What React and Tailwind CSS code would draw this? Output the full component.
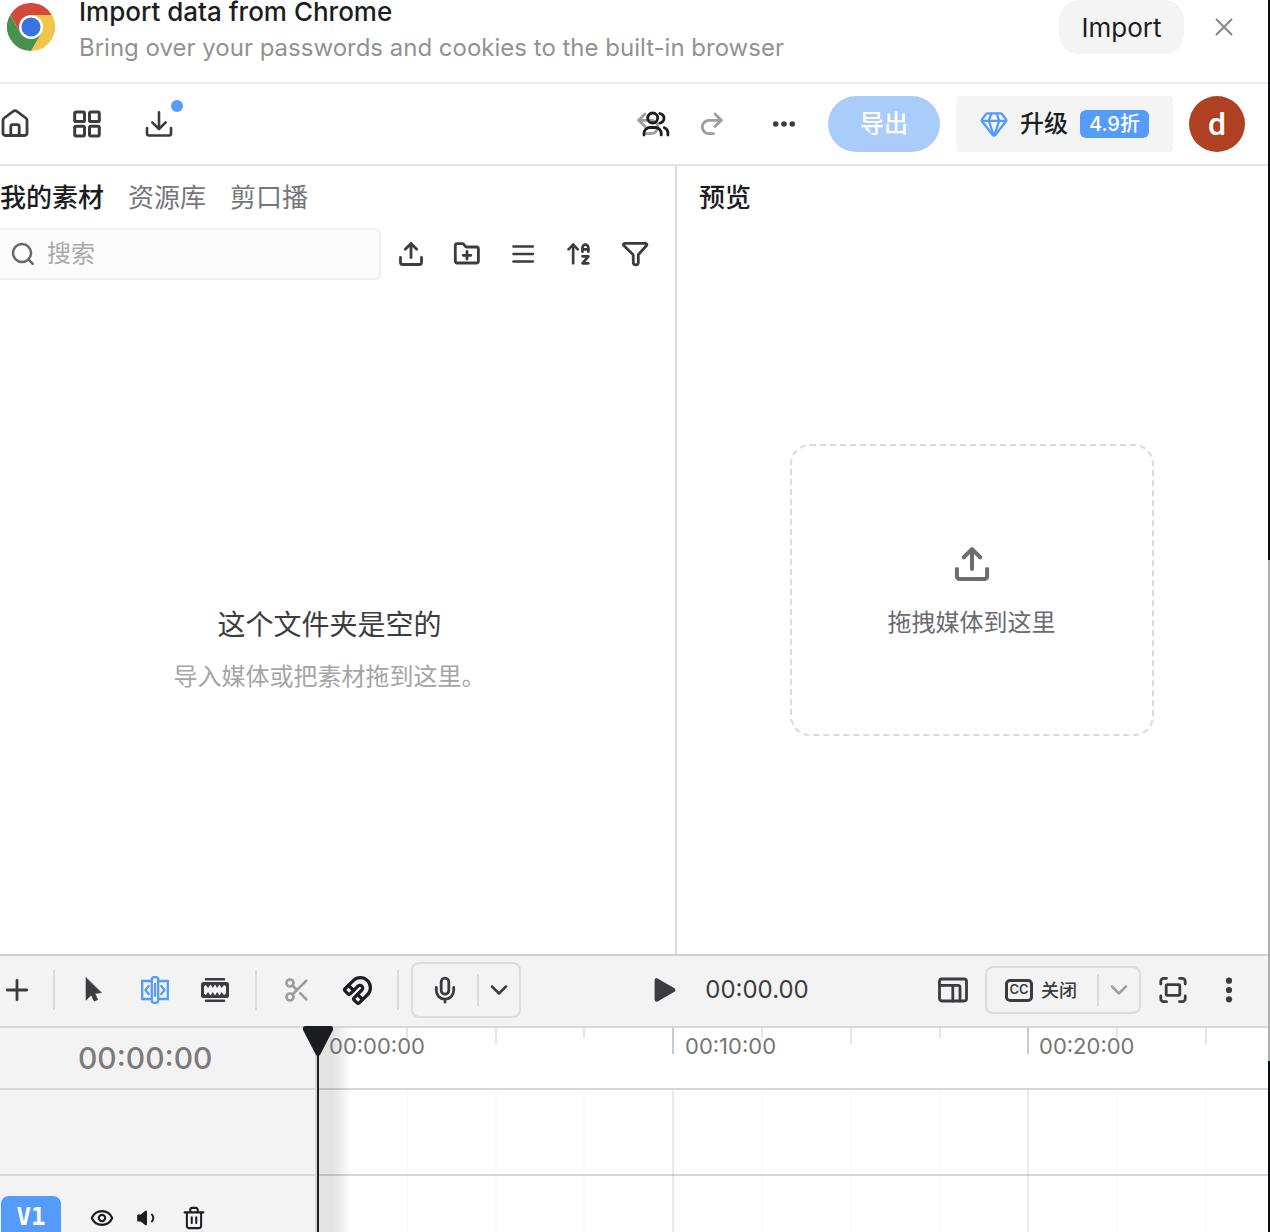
import { useState } from "react";
import { ArrowUpAZ, Magnet, Scissors } from "lucide-react";

const RULER_STEP = 88.8;

const ticks = Array.from({ length: 24 }, (_, i) => {
  const n = i + 1;
  return { n, left: Math.round(n * RULER_STEP), major: n % 4 === 0, half: n % 2 === 0 };
});

const labels = [
  { text: "00:00:00", left: 12 },
  { text: "00:10:00", left: 368 },
  { text: "00:20:00", left: 722 },
];

function Icon({ size = 32, stroke = 2.8, className = "", children }) {
  return (
    <svg
      width={size}
      height={size}
      viewBox="0 0 32 32"
      fill="none"
      stroke="currentColor"
      strokeWidth={stroke}
      strokeLinecap="round"
      strokeLinejoin="round"
      className={`shrink-0 ${className}`}
      aria-hidden="true"
    >
      {children}
    </svg>
  );
}

function IconButton({ label, className = "w-10", children }) {
  return (
    <button type="button" aria-label={label} className={`flex h-10 shrink-0 items-center justify-center ${className}`}>
      {children}
    </button>
  );
}

function Divider() {
  return <span className="h-10 w-0.5 shrink-0 bg-[#dcdcdc]" />;
}

function ChromeLogo() {
  return (
    <svg width="48" height="48" viewBox="0 0 48 48" className="shrink-0" aria-hidden="true">
      <path d="M3.2 12A24 24 0 0 1 44.8 12H24V24L13.6 30z" fill="#d24b3a" />
      <path d="M44.8 12A24 24 0 0 1 24 48L34.4 30 24 24V12z" fill="#f2c548" />
      <path d="M24 48A24 24 0 0 1 3.2 12L13.6 30 24 24 34.4 30z" fill="#48914c" />
      <circle cx="24" cy="24" r="12" fill="#fff" />
      <circle cx="24" cy="24" r="9.6" fill="#3a72e0" />
    </svg>
  );
}

function UploadIcon({ size, stroke }) {
  return (
    <Icon size={size} stroke={stroke}>
      <path d="M5.5 19.5V24.5a2 2 0 0 0 2 2h17a2 2 0 0 0 2-2V19.5" />
      <path d="M16 19.5V5.5M10.3 11.3 16 5.6l5.7 5.7" />
    </Icon>
  );
}

function Chevron({ className }) {
  return (
    <Icon className={className} stroke={2.5}>
      <path d="m9 12.5 7 7 7-7" />
    </Icon>
  );
}

function ImportBanner() {
  return (
    <header className="shrink-0 border-b-2 border-[#ebebeb] pb-7">
      <div className="flex h-[54px] items-center pr-6 pl-[7px]">
        <ChromeLogo />
        <div className="ml-6 min-w-0 flex-1 self-start">
          <p className="text-[26px] leading-6 font-medium whitespace-nowrap text-[#1c1d22]">Import data from Chrome</p>
          <p className="mt-1.5 text-2xl leading-9 whitespace-nowrap text-[#929292]">
            Bring over your passwords and cookies to the built-in browser
          </p>
        </div>
        <button type="button" className="h-full w-[125px] rounded-[20px] bg-[#f4f4f4] text-[26px] text-[#1c1d22]">
          Import
        </button>
        <IconButton label="Close" className="ml-5 w-10 text-[#858585]">
          <Icon stroke={2}>
            <path d="m8.5 8.5 15 15M23.5 8.5l-15 15" />
          </Icon>
        </IconButton>
      </div>
    </header>
  );
}

function TopBar() {
  return (
    <div className="flex h-[82px] shrink-0 items-center justify-between border-b-2 border-[#e4e4e4] pr-[23px] text-[#3c3c40]">
      <nav className="-ml-[13px] flex gap-4">
        <IconButton label="主页" className="w-14">
          <Icon>
            <path d="M4 25.3V12.4a3 3 0 0 1 1.2-2.4l8.7-6.5a3.4 3.4 0 0 1 4.2 0l8.7 6.5a3 3 0 0 1 1.2 2.4v12.9a2.2 2.2 0 0 1-2.2 2.2H6.2A2.2 2.2 0 0 1 4 25.3z" />
            <path d="M11.8 27.5v-8.8a2 2 0 0 1 2-2h4.4a2 2 0 0 1 2 2v8.8" />
          </Icon>
        </IconButton>
        <IconButton label="项目" className="w-14">
          <Icon stroke={3}>
            <rect x="3.7" y="4" width="9.8" height="9.6" rx="1.4" />
            <rect x="18.5" y="4" width="9.8" height="9.6" rx="1.4" />
            <rect x="3.7" y="18.2" width="9.8" height="9.8" rx="1.4" />
            <rect x="18.5" y="18.2" width="9.8" height="9.8" rx="1.4" />
          </Icon>
        </IconButton>
        <div className="relative">
          <IconButton label="下载" className="w-14">
            <Icon stroke={2.6}>
              <path d="M4 20v5.5a2 2 0 0 0 2 2h20a2 2 0 0 0 2-2V20" />
              <path d="M16 4.2V21M9.3 14.3l6.7 6.7 6.7-6.7" />
            </Icon>
          </IconButton>
          <span className="absolute -top-1 right-1 size-3 rounded-full bg-[#559bfa]" />
        </div>
      </nav>

      <div className="flex items-center gap-4">
        <div className="flex gap-2 text-[#9d9d9d]">
          <div className="relative">
            <IconButton label="撤销" className="w-14">
              <Icon>
                <path d="M6.5 12.3H19a6.7 6.7 0 0 1 0 13.4h-4.5M13 6l-6.3 6.3 6.3 6.3" />
              </Icon>
            </IconButton>
            <button type="button" aria-label="协作" className="absolute top-1 left-5 text-[#1c1d22]">
              <Icon stroke={2.8}>
                <circle cx="12.7" cy="10" r="5" />
                <path d="M4 27v-1.5a6 6 0 0 1 6-6h5.2a6 6 0 0 1 6 6V27" />
                <path d="M19.8 5.5c5.6 1.2 5.6 8.2 0 9.6M24.3 19.8c2.2.8 3.6 2.8 3.6 5.2v2" />
              </Icon>
            </button>
          </div>
          <IconButton label="重做" className="w-14">
            <Icon>
              <path d="M25.5 12.3H13a6.7 6.7 0 0 0 0 13.4h4.5M19 6l6.3 6.3-6.3 6.3" />
            </Icon>
          </IconButton>
        </div>
        <IconButton label="更多" className="w-14">
          <Icon>
            <g fill="currentColor" stroke="none">
              <circle cx="7.7" cy="16" r="2.8" />
              <circle cx="16" cy="16" r="2.8" />
              <circle cx="24.3" cy="16" r="2.8" />
            </g>
          </Icon>
        </IconButton>
        <button type="button" className="h-14 w-28 rounded-full bg-[#aaccfb] text-2xl font-medium text-white">
          导出
        </button>
        <button type="button" className="flex h-14 w-[217px] items-center rounded bg-[#f4f4f4] pl-[22px] text-[#1c1d22]">
          <Icon stroke={2.3} className="text-[#559bfa]">
            <path d="M9.5 5.4h13a2 2 0 0 1 1.6.8l3.9 5a1.6 1.6 0 0 1 0 2.1L17.3 27a1.7 1.7 0 0 1-2.6 0L4 13.3a1.6 1.6 0 0 1 0-2.1l3.9-5a2 2 0 0 1 1.6-.8z" />
            <path d="M4 12.8h24M13.2 5.6l-2.4 7.2L15.6 27M18.8 5.6l2.4 7.2L16.4 27" />
          </Icon>
          <span className="ml-[10px] text-2xl font-medium">升级</span>
          <span className="ml-3 flex h-7 w-[69px] items-center justify-center rounded-md bg-[#559bfa] text-xl font-medium text-white">
            4.9折
          </span>
        </button>
        <button type="button" className="size-14 rounded-full bg-[#af4022] font-['Roboto'] text-[32px] font-medium text-white">
          d
        </button>
      </div>
    </div>
  );
}

function MediaPanel() {
  const [tab, setTab] = useState("我的素材");
  const [query, setQuery] = useState("");

  return (
    <section className="flex min-w-0 flex-col border-r-2 border-[#dadada]">
      <div className="flex h-[62px] items-center gap-6 text-[26px]">
        {["我的素材", "资源库", "剪口播"].map((name) => (
          <button
            key={name}
            type="button"
            onClick={() => setTab(name)}
            className={tab === name ? "font-medium text-[#1c1d22]" : "text-[#75757a]"}
          >
            {name}
          </button>
        ))}
      </div>
      <div className="flex items-center pr-5 text-[#3c3c40]">
        <label className="-ml-1 flex h-[52px] min-w-0 flex-1 items-center rounded-md border-2 border-[#efefef] bg-[#fcfcfc] pl-[9px]">
          <Icon className="text-[#66666b]" stroke={2.5}>
            <circle cx="15" cy="15" r="9" />
            <path d="m21.6 21.6 4.2 4.2" />
          </Icon>
          <input
            type="text"
            aria-label="搜索"
            placeholder="搜索"
            value={query}
            onChange={(e) => setQuery(e.target.value)}
            className="ml-2 min-w-0 flex-1 bg-transparent text-2xl outline-none placeholder:text-[#a9a9a9]"
          />
        </label>
        <div className="ml-[10px] flex gap-4">
          <IconButton label="上传">
            <UploadIcon />
          </IconButton>
          <IconButton label="新建文件夹">
            <Icon>
              <path d="M4.3 23V7.6a2 2 0 0 1 2-2h5a2 2 0 0 1 1.5.7l1.6 2a2 2 0 0 0 1.5.7h9.5a2 2 0 0 1 2 2V23a2 2 0 0 1-2 2H6.3a2 2 0 0 1-2-2z" />
              <path d="M16 13.5v7.6M12.2 17.3h7.6" />
            </Icon>
          </IconButton>
          <IconButton label="列表视图">
            <Icon stroke={2.6}>
              <path d="M6.5 8.5h19.3M6.5 16h19.3M6.5 23.5h19.3" />
            </Icon>
          </IconButton>
          <IconButton label="排序">
            <ArrowUpAZ size={28} strokeWidth={2.3} />
          </IconButton>
          <IconButton label="筛选">
            <Icon>
              <path d="M5.7 5.3h20.8a1.3 1.3 0 0 1 1 2.2l-8.2 9.2v7.8a2.3 2.3 0 0 1-2.3 2.3h-.4a2.3 2.3 0 0 1-2.3-2.3l-.1-7.8L4.8 7.5a1.3 1.3 0 0 1 .9-2.2z" />
            </Icon>
          </IconButton>
        </div>
      </div>
      <div className="flex flex-1 flex-col items-center justify-center pt-[68px] pr-4">
        <h2 className="text-[28px] leading-10 text-[#3c3c40]">这个文件夹是空的</h2>
        <p className="mt-3 text-2xl leading-10 text-[#a5a5a5]">导入媒体或把素材拖到这里。</p>
      </div>
    </section>
  );
}

function PreviewPanel() {
  return (
    <section className="flex min-w-0 flex-col">
      <h2 className="flex h-[62px] items-center pl-[22px] text-[26px] font-medium text-[#1c1d22]">预览</h2>
      <div className="flex flex-1 items-center justify-center pr-0.5 pb-0.5">
        <button
          type="button"
          className="flex h-[292px] w-[364px] flex-col items-center justify-center rounded-[20px] border-2 border-dashed border-[#dadada] text-2xl text-[#6b6b70]"
        >
          <UploadIcon size={46} stroke={2.8} />
          <span className="mt-5">拖拽媒体到这里</span>
        </button>
      </div>
    </section>
  );
}

function TimelineToolbar() {
  return (
    <div className="flex h-[74px] shrink-0 items-center justify-between border-y-2 border-t-[#cfcfcf] border-b-[#d7d7d7] bg-[#f3f3f3] pb-0.5 text-[#3c3c40]">
      <div className="flex items-center">
        <IconButton label="添加轨道" className="-ml-[3px] w-10">
          <Icon stroke={2.8}>
            <path d="M16 6.3v19.4M6.3 16h19.4" />
          </Icon>
        </IconButton>
        <div className="ml-4 flex items-center">
          <Divider />
          <IconButton label="选择" className="ml-[18px] w-10">
            <Icon stroke={0.6}>
              <path fill="currentColor" d="M9 3.8v22.4l5.3-5.2 2.9 6.2 3.6-1.6-3-6.2 6.5-.6z" />
            </Icon>
          </IconButton>
          <IconButton label="分割" className="ml-[22px] w-10 text-[#559bfa]">
            <Icon stroke={2.3}>
              <path d="M12.6 7H3.2v18h9.4M19.4 7h9.4v18h-9.4" strokeLinejoin="miter" />
              <rect x="12.8" y="3.2" width="6.4" height="25.6" rx="2.6" />
              <path d="M16 10v12M9.8 12 6.4 16l3.4 4.2M22.2 12l3.4 4-3.4 4.2" />
            </Icon>
          </IconButton>
          <IconButton label="波形" className="ml-5 w-10">
            <Icon stroke={2.6}>
              <path d="M7 5.3h18M7 26.7h18" />
              <rect x="2" y="8" width="28" height="16" rx="2.5" fill="currentColor" stroke="none" />
              <path
                d="M5 12.5l1.8-1.5 2.2 3 2.6-3.6 2.2 3.6 2.2-3.6 2.2 3.6 2.2-3.6 2.2 3.6 2.4-3 2 1.5v7l-2 1.5-2.4-3-2.2 3.6-2.2-3.6-2.2 3.6-2.2-3.6-2.2 3.6L9 18l-2.2 3L5 19.5z"
                fill="#f7f7f7"
                stroke="none"
              />
            </Icon>
          </IconButton>
        </div>
        <div className="ml-5 flex items-center">
          <Divider />
          <IconButton label="剪切" className="ml-5 w-10 text-[#9d9d9d]">
            <Scissors size={28} strokeWidth={2.3} />
          </IconButton>
          <IconButton label="吸附" className="ml-5 w-10 text-[#1c1d22]">
            <Magnet size={31} strokeWidth={2.5} />
          </IconButton>
        </div>
        <div className="ml-5 flex items-center">
          <Divider />
          <div className="ml-3 flex h-14 w-[110px] items-center rounded-lg border-2 border-[#dcdcdc]">
            <IconButton label="录音" className="ml-3 w-10">
              <Icon>
                <rect x="12.2" y="4.2" width="7.6" height="16" rx="3.8" />
                <path d="M7.3 13.5v3a8.7 8.7 0 0 0 17.4 0v-3M16 25.2v3" />
              </Icon>
            </IconButton>
            <span className="ml-3 h-8 w-0.5 bg-[#dcdcdc]" />
            <IconButton label="录音选项" className="w-10">
              <Chevron />
            </IconButton>
          </div>
        </div>
      </div>

      <div className="flex items-center">
        <IconButton label="播放">
          <Icon stroke={4}>
            <path fill="currentColor" d="M7.6 6.2v19.6L24.4 16z" />
          </Icon>
        </IconButton>
        <span className="ml-5 text-2xl">00:00.00</span>
      </div>

      <div className="flex items-center pr-[19px]">
        <IconButton label="布局">
          <Icon>
            <rect x="2.5" y="5" width="27" height="22" rx="2.4" />
            <path d="M3 11.3h18a2 2 0 0 1 2 2V27M15.8 11.3V27" />
          </Icon>
        </IconButton>
        <div className="ml-3 flex h-12 w-[156px] items-center rounded-lg border-2 border-[#dcdcdc]">
          <button type="button" className="ml-[18px] flex items-center gap-2">
            <span className="flex h-[23px] w-7 items-center justify-center rounded-[5px] border-[3px] border-[#3c3c40] text-[13px] font-semibold">
              CC
            </span>
            <span className="text-[18px] font-medium">关闭</span>
          </button>
          <span className="ml-5 h-8 w-0.5 bg-[#dcdcdc]" />
          <IconButton label="字幕选项" className="w-10 text-[#a0a0a0]">
            <Chevron />
          </IconButton>
        </div>
        <IconButton label="全屏" className="ml-3 w-10">
          <Icon>
            <path d="M3.8 10V7.3a3 3 0 0 1 3-3h2.7M22.5 4.3h2.7a3 3 0 0 1 3 3V10M28.2 22v2.7a3 3 0 0 1-3 3h-2.7M9.5 27.7H6.8a3 3 0 0 1-3-3V22" />
            <rect x="9.2" y="10.6" width="13.6" height="10.8" rx="1" />
          </Icon>
        </IconButton>
        <IconButton label="更多选项" className="ml-4 w-10">
          <Icon>
            <g fill="currentColor" stroke="none">
              <circle cx="16" cy="6.7" r="3.1" />
              <circle cx="16" cy="16" r="3.1" />
              <circle cx="16" cy="25.3" r="3.1" />
            </g>
          </Icon>
        </IconButton>
      </div>
    </div>
  );
}

function Timeline() {
  return (
    <section className="relative grid shrink-0 grid-cols-[317px_minmax(0,1fr)]">
      <div className="border-r-2 border-[#d7d7d7] bg-[#f3f3f3]">
        <div className="flex h-[62px] items-center border-b-2 border-[#d7d7d7] pl-[78px] text-[30px] font-medium text-[#7b7b7b]">
          00:00:00
        </div>
        <div className="h-[86px] border-b-2 border-[#d7d7d7]" />
        <div className="flex h-14 items-start overflow-hidden pt-5 text-[#1c1d22]">
          <button
            type="button"
            className="ml-px h-12 w-[60px] shrink-0 rounded-lg bg-[#559bfa] pb-1.5 font-['DejaVu_Sans_Mono'] text-2xl font-bold text-white"
          >
            V1
          </button>
          <div className="ml-[29px] flex items-center gap-5 pt-2.5">
            <button type="button" aria-label="显示轨道">
              <Icon size={24} stroke={2.8}>
                <path d="M2.4 16C5 10 10 6.8 16 6.8S27 10 29.6 16C27 22 22 25.2 16 25.2S5 22 2.4 16z" />
                <circle cx="16" cy="16" r="4.2" />
              </Icon>
            </button>
            <button type="button" aria-label="静音">
              <Icon size={24} stroke={2.6}>
                <path d="M5.5 12.5h4.3l6.2-5v17l-6.2-5H5.5z" fill="currentColor" />
                <path d="M24 11.5q3.6 4.5 0 9" />
              </Icon>
            </button>
            <button type="button" aria-label="删除轨道" className="ml-1">
              <Icon size={24} stroke={2.7}>
                <path d="M3.5 8.5h25M6.5 8.5v18a3 3 0 0 0 3 3h13a3 3 0 0 0 3-3v-18M11 8V5a2.5 2.5 0 0 1 2.5-2.5h5A2.5 2.5 0 0 1 21 5v3M13 15v7.5M19 15v7.5" />
              </Icon>
            </button>
          </div>
        </div>
      </div>

      <div className="relative overflow-hidden bg-white">
        <div className="h-[62px] border-b-2 border-[#d7d7d7]" />
        <div className="h-[86px] border-b-2 border-[#d7d7d7]" />
        {ticks.map(({ n, left, major, half }) => (
          <div key={n}>
            <span
              style={{ left }}
              className={`absolute top-0 w-0.5 ${major ? "h-[26px] bg-[#c9c9c9]" : half ? "h-4 bg-[#e6e6e6]" : "h-2.5 bg-[#e6e6e6]"}`}
            />
            <span
              style={{ left }}
              className={`absolute top-[62px] bottom-0 w-0.5 ${major ? "bg-black/8" : "bg-black/2"}`}
            />
          </div>
        ))}
        <div className="absolute inset-y-0 left-0 w-[34px] bg-linear-to-r from-black/11 from-50% to-transparent" />
        {labels.map(({ text, left }) => (
          <span key={text} style={{ left }} className="absolute top-1 text-[22px] leading-7 text-[#757575]">
            {text}
          </span>
        ))}
      </div>

      <svg width="30" height="32" viewBox="0 0 30 32" className="absolute -top-0.5 left-[303px]" aria-hidden="true">
        <path d="M2 0h26a2 2 0 0 1 2 2v2L17 29a2.3 2.3 0 0 1-4 0L0 4V2a2 2 0 0 1 2-2z" fill="#1c1d22" />
      </svg>
      <span className="absolute inset-y-0 left-[317px] w-0.5 bg-[#1c1d22]" />
    </section>
  );
}

export default function App() {
  return (
    <div className="flex h-screen overflow-hidden bg-white font-['Inter','Noto_Sans_CJK_SC',sans-serif]">
      <main className="flex min-w-0 flex-1 flex-col">
        <ImportBanner />
        <TopBar />
        <div className="grid min-h-0 flex-1 grid-cols-[677fr_591fr]">
          <MediaPanel />
          <PreviewPanel />
        </div>
        <TimelineToolbar />
        <Timeline />
      </main>
      {/* sliver of the window behind */}
      <div className="flex w-0.5 flex-col">
        <span className="flex-[560] bg-[#0b0d1c]" />
        <span className="flex-[501] bg-[#adadad]" />
        <span className="flex-[171] bg-[#0b0d1c]" />
      </div>
    </div>
  );
}
